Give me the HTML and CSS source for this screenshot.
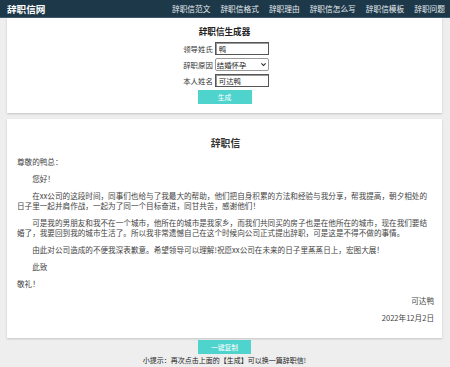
FILE: index.html
```html
<!DOCTYPE html>
<html lang="zh-CN">
  <head>
    <meta charset="UTF-8" />
    <meta name="viewport" content="width=device-width, initial-scale=1.0" />
    <title>辞职信网</title>
    <link rel="stylesheet" href="styles.css">
  </head>
  <body>
    <div class="top-bar">
      <div class="logo">辞职信网</div>
      <div class="nav">
        <a href="#">辞职信范文</a>
        <a href="#">辞职信格式</a>
        <a href="#">辞职理由</a>
        <a href="#">辞职信怎么写</a>
        <a href="#">辞职信模板</a>
        <a href="#">辞职问题</a>
      </div>
    </div>
    <div class="main">
      <div class="card generator">
        <div class="gen-title">辞职信生成器</div>
        <div class="form-row">
          <label>领导姓氏</label>
          <input type="text" value="鸭" />
        </div>
        <div class="form-row">
          <label>辞职原因</label>
          <div class="select-wrap">
            <select>
              <option>结婚怀孕</option>
              <option>家庭原因</option>
              <option>个人发展</option>
            </select>
            <svg class="chevron" viewBox="0 0 10 10" width="7" height="7">
              <path d="M2 3.5 L5 6.5 L8 3.5" fill="none" stroke="#222" stroke-width="1.6" />
            </svg>
          </div>
        </div>
        <div class="form-row">
          <label>本人姓名</label>
          <input type="text" value="可达鸭" />
        </div>
        <button class="btn gen-btn">生成</button>
      </div>

      <div class="card letter">
        <div class="letter-title">辞职信</div>
        <p class="plain">尊敬的鸭总：</p>
        <p>您好！</p>
        <p>在xx公司的这段时间，同事们也给与了我最大的帮助，他们把自身积累的方法和经验与我分享，帮我提高，朝夕相处的日子里一起并肩作战，一起为了同一个目标奋进，同甘共苦，感谢他们！</p>
        <p>可是我的男朋友和我不在一个城市，他所在的城市是我家乡，而我们共同买的房子也是在他所在的城市，现在我们要结婚了，我要回到我的城市生活了。所以我非常遗憾自己在这个时候向公司正式提出辞职，可是这是不得不做的事情。</p>
        <p>由此对公司造成的不便我深表歉意。希望领导可以理解!祝愿xx公司在未来的日子里蒸蒸日上，宏图大展！</p>
        <p>此致</p>
        <p class="plain">敬礼！</p>
        <p class="sign">可达鸭</p>
        <p class="sign">2022年12月2日</p>
      </div>

      <div class="copy-area">
        <button class="btn copy-btn">一键复制</button>
        <div class="tip">小提示：再次点击上面的【生成】可以换一篇辞职信!</div>
      </div>
    </div>
  </body>
</html>
```

FILE: styles.css
```css
body {
  margin: 0;
  background-color: #eeeeee;
  color: #333;
  font-family: "Noto Sans CJK SC", "Noto Sans", sans-serif;
}

.top-bar {
  height: 18px;
  background-color: #1d3849;
  border-bottom: 1px solid #3d5a6c;
  box-sizing: border-box;
  display: flex;
  align-items: center;
  justify-content: space-between;
  padding: 0 5px 0 7px;
}

.logo {
  color: white;
  font-size: 9.6px;
  font-weight: 700;
  line-height: 18px;
}

.nav {
  display: flex;
  gap: 10px;
}

.nav a {
  color: #e8edf0;
  text-decoration: none;
  font-size: 7.7px;
  line-height: 18px;
}

.main {
  padding: 0 8px 0 7px;
}

.card {
  background-color: white;
  box-shadow: 0 1px 2px rgba(0, 0, 0, 0.18);
}

.generator {
  display: flex;
  flex-direction: column;
  align-items: center;
  padding: 7px 0 9px;
  gap: 3px;
}

.gen-title {
  font-size: 8.6px;
  font-weight: 700;
  line-height: 13px;
  color: #222;
  margin-bottom: 1px;
}

.form-row {
  display: flex;
  align-items: center;
  gap: 2px;
  height: 13px;
  margin-left: 3px;
}

.form-row label {
  font-size: 7.4px;
  line-height: 13px;
  color: #333;
}

.form-row input,
.form-row select {
  width: 54px;
  height: 13px;
  box-sizing: border-box;
  font-family: "Noto Sans CJK SC", sans-serif;
  font-size: 7.4px;
  color: #222;
  padding: 0 3px;
  margin: 0;
  outline: none;
}

.form-row input {
  border: 1px solid #555;
  box-shadow: inset 1px 1px 0 #999;
}

.select-wrap {
  position: relative;
  display: flex;
}

.form-row select {
  appearance: none;
  -webkit-appearance: none;
  background-color: white;
  border: 1px solid #999;
  border-radius: 2px;
  padding: 0 1px;
}

.chevron {
  position: absolute;
  right: 2px;
  top: 3px;
  pointer-events: none;
}

.btn {
  background-color: #4fd3cd;
  color: white;
  border: none;
  font-family: "Noto Sans CJK SC", sans-serif;
  font-size: 6.8px;
  height: 14px;
  width: 54px;
  padding: 0;
  cursor: pointer;
}

.gen-btn {
  margin-top: 0;
}

.letter {
  margin-top: 6px;
  padding: 16px 8px 17px 10px;
  height: 219px;
  box-sizing: border-box;
}

.letter-title {
  text-align: center;
  font-size: 9.8px;
  font-weight: 700;
  line-height: 16px;
  color: #333;
  margin-bottom: 6px;
}

.letter p {
  margin: 0 0 7px;
  font-size: 7.6px;
  line-height: 10px;
  color: #444;
  text-indent: 2em;
}

.letter p.plain {
  text-indent: 0;
}

.letter p.sign {
  text-indent: 0;
  text-align: right;
}

.copy-area {
  display: flex;
  flex-direction: column;
  align-items: center;
  padding-top: 2px;
}

.copy-btn {
  width: 53px;
}

.tip {
  margin-top: 1px;
  font-size: 7px;
  line-height: 10px;
  color: #222;
}
```
